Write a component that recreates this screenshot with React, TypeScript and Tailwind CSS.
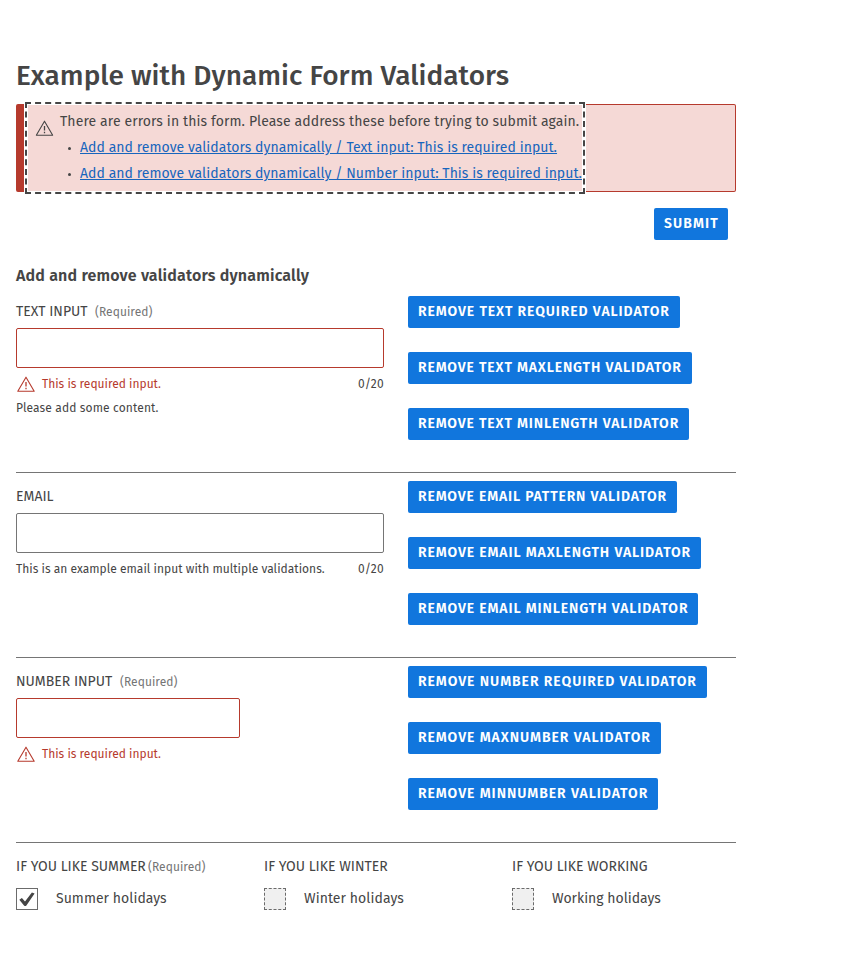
import type { ReactNode } from "react";

function Warning({ className = "" }: { className?: string }) {
  return (
    <svg className={`block h-4 w-[18px] shrink-0 ${className}`} viewBox="0 0 18 16" fill="none" stroke="currentColor">
      <path d="M9 1.2 L17.2 15.3 H0.8 Z" strokeWidth="1.1" strokeLinejoin="round" />
      <path d="M9 6 V10.4 M9 11.8 V13.2" strokeWidth="1.3" />
    </svg>
  );
}

function Button({ children, size }: { children: string; size: string }) {
  return (
    <button
      className={`flex h-8 items-center whitespace-nowrap rounded-[2px] bg-[#1176dd] pl-[10px] pb-px text-[14px] font-semibold text-white ${size}`}
    >
      {children}
    </button>
  );
}

function Label({ text, size, required }: { text: string; size: string; required?: boolean }) {
  return (
    <div className="flex h-8 items-center whitespace-nowrap pb-0.5 text-[14px]">
      <span className={size}>{text}</span>
      {required && <Required />}
    </div>
  );
}

function Required() {
  return <span className="pt-px text-[12px] tracking-[0.05px] text-[#757575]">(Required)</span>;
}

function ErrorText() {
  return (
    <div className="flex items-center text-[#b63a2d]">
      <span className="ml-px mr-[7px]"><Warning /></span>
      <span className="whitespace-nowrap text-[12px]">This is required input.</span>
    </div>
  );
}

function Section({ children, buttons }: { children: ReactNode; buttons: [string, string][] }) {
  return (
    <section className="flex h-[177px] border-b border-[#757575]">
      <div className="w-[368px]">{children}</div>
      <div className="ml-6 flex flex-col items-start gap-6">
        {buttons.map(([text, size]) => <Button key={text} size={size}>{text}</Button>)}
      </div>
    </section>
  );
}

function Choice({ label, labelSize, text, textSize, checked }: { label: string; labelSize: string; text: string; textSize: string; checked?: boolean }) {
  return (
    <div className="w-[248px] shrink-0">
      <Label text={label} size={labelSize} required={checked} />
      <div className="flex h-8 items-center">
        <span className={`flex size-[22px] items-center justify-center border border-[#6b6b6b] ${checked ? "bg-white" : "border-dashed bg-[#f0f0f0]"}`}>
          {checked && (
            <svg className="size-5 shrink-0" viewBox="0 0 20 20" fill="#454545">
              <path d="M2.3 10.8 L4.9 9 L8 12.5 L14.9 3.4 L17.6 4.6 L9.4 16.4 Q8.2 17.6 7 16.4 Z" />
            </svg>
          )}
        </span>
        <span className={`ml-[18px] whitespace-nowrap pb-0.5 text-[14px] ${textSize}`}>{text}</span>
      </div>
    </div>
  );
}

export default function App() {
  return (
    <main className="h-[963px] w-full bg-white px-4 pt-14 font-['Fira_Sans','Noto_Sans',sans-serif] text-[#454545]">
      <div className="w-[720px]">
        <h1 className="flex h-10 items-center whitespace-nowrap text-[28px] font-medium tracking-[0.03px]">
          Example with Dynamic Form Validators
        </h1>
        <div className="mt-2 h-[88px] rounded-[2px] border border-l-8 border-[#b63a2d] bg-[#f5d9d6]">
          <div className="ml-1 flex h-[86px] w-[554px] bg-[#f5d9d6] pt-1 text-[14px] leading-[26px] shadow-[0_0_0_4px_#fff] outline-2 outline-offset-1 outline-dashed outline-[#454545]">
            <span className="ml-[7px] mt-[11px]"><Warning className="translate-x-[0.5px]" /></span>
            <div className="ml-[7px] whitespace-nowrap">
              <p className="tracking-[0.11px]">There are errors in this form. Please address these before trying to submit again.</p>
              <ul className="text-[#1765bd]">
                <li className="flex items-center">
                  <i className="ml-2 mr-[9px] size-[3px] rounded-full bg-[#454545]" />
                  <a className="tracking-[0.045px] underline">Add and remove validators dynamically / Text input: This is required input.</a>
                </li>
                <li className="flex items-center">
                  <i className="ml-2 mr-[9px] size-[3px] rounded-full bg-[#454545]" />
                  <a className="tracking-[0.04px] underline">Add and remove validators dynamically / Number input: This is required input.</a>
                </li>
              </ul>
            </div>
          </div>
        </div>
        <div className="mt-4 flex justify-end pr-2">
          <Button size="w-[74px] tracking-[1.1px]">SUBMIT</Button>
        </div>
        <h2 className="mt-6 flex h-6 items-center whitespace-nowrap text-[16px] font-semibold tracking-[0.18px]">
          Add and remove validators dynamically
        </h2>
        <div className="mt-2 flex flex-col gap-2">
          <Section buttons={[
            ["REMOVE TEXT REQUIRED VALIDATOR", "w-[272px] tracking-[0.89px]"],
            ["REMOVE TEXT MAXLENGTH VALIDATOR", "w-[284px] tracking-[0.84px]"],
            ["REMOVE TEXT MINLENGTH VALIDATOR", "w-[281px] tracking-[0.84px]"],
          ]}>
            <Label text="TEXT INPUT" size="w-[79px]" required />
            <input className="block h-10 w-full rounded-[2px] border border-[#b63a2d]" />
            <div className="flex h-8 items-center justify-between">
              <ErrorText />
              <span className="text-[12px] tracking-[0.25px]">0/20</span>
            </div>
            <p className="text-[12px] leading-4 tracking-[0.12px]">Please add some content.</p>
          </Section>
          <Section buttons={[
            ["REMOVE EMAIL PATTERN VALIDATOR", "w-[269px] tracking-[0.83px]"],
            ["REMOVE EMAIL MAXLENGTH VALIDATOR", "w-[293px] tracking-[0.87px]"],
            ["REMOVE EMAIL MINLENGTH VALIDATOR", "w-[290px] tracking-[0.87px]"],
          ]}>
            <Label text="EMAIL" size="" />
            <input className="block h-10 w-full rounded-[2px] border border-[#757575]" />
            <div className="flex h-8 items-center justify-between whitespace-nowrap text-[12px]">
              <span className="tracking-[0.025px]">This is an example email input with multiple validations.</span>
              <span className="tracking-[0.25px]">0/20</span>
            </div>
          </Section>
          <Section buttons={[
            ["REMOVE NUMBER REQUIRED VALIDATOR", "w-[299px] tracking-[0.94px]"],
            ["REMOVE MAXNUMBER VALIDATOR", "w-[253px] tracking-[0.93px]"],
            ["REMOVE MINNUMBER VALIDATOR", "w-[250px] tracking-[0.93px]"],
          ]}>
            <Label text="NUMBER INPUT" size="w-[104px]" required />
            <input className="block h-10 w-[224px] rounded-[2px] border border-[#b63a2d]" />
            <div className="flex h-8 items-center"><ErrorText /></div>
          </Section>
        </div>
        <div className="mt-2 flex">
          <Choice label="IF YOU LIKE SUMMER" labelSize="w-[132px]" text="Summer holidays" textSize="tracking-[0.04px]" checked />
          <Choice label="IF YOU LIKE WINTER" labelSize="" text="Winter holidays" textSize="tracking-[0.07px]" />
          <Choice label="IF YOU LIKE WORKING" labelSize="" text="Working holidays" textSize="" />
        </div>
      </div>
    </main>
  );
}
